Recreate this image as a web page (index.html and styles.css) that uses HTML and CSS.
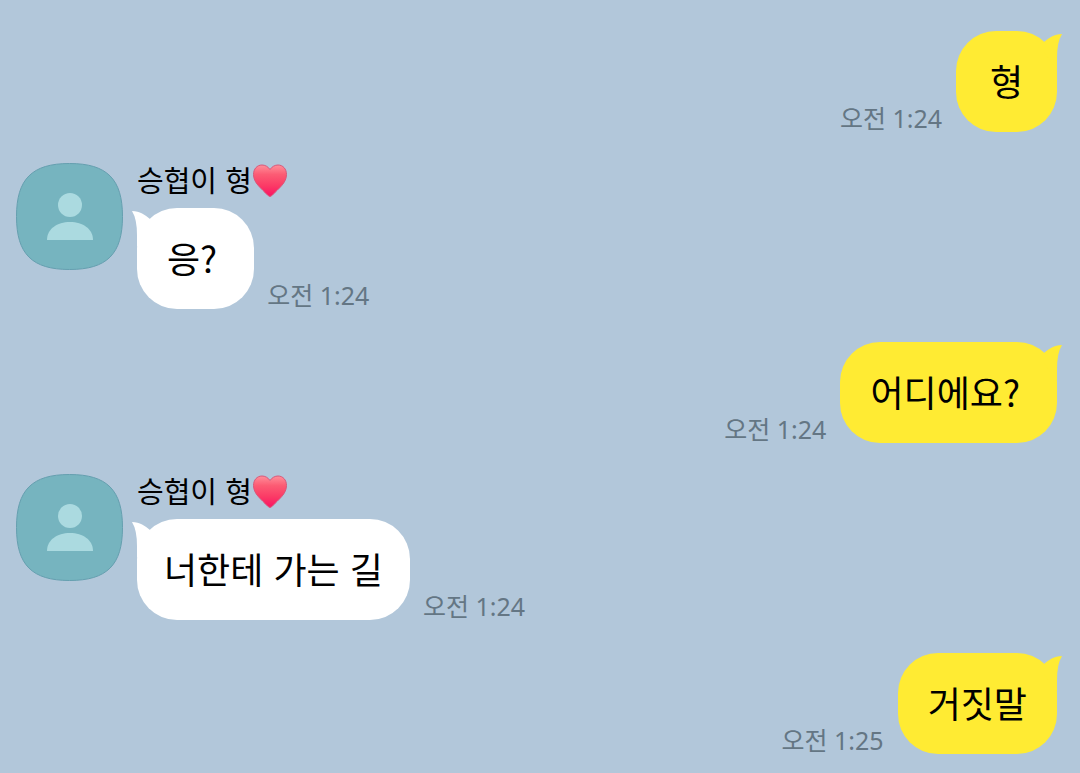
FILE: index.html
```html
<!DOCTYPE html>
<html lang="ko">
<head>
    <meta charset="UTF-8">
    <meta name="viewport" content="width=device-width, initial-scale=1.0">
    <title>채팅</title>
    <link rel="stylesheet" href="styles.css">
</head>
<body>

    <!-- shared shapes -->
    <svg class="defs" aria-hidden="true">
        <defs>
            <linearGradient id="heart-fill" x1="0" y1="0" x2="0" y2="1">
                <stop offset="0" stop-color="#ff8f9a"/>
                <stop offset="0.3" stop-color="#fc5c74"/>
                <stop offset="0.65" stop-color="#fb3b66"/>
                <stop offset="1" stop-color="#fb1263"/>
            </linearGradient>
        </defs>
        <symbol id="person" viewBox="0 0 107 107">
            <path d="M53.500 .5C91 .5 106.500 16 106.500 53.500S91 106.500 53.500 106.500 .5 91 .5 53.500 16 .5 53.500 .5z" fill="#76b4bf" stroke="#659faf"/>
            <circle cx="54" cy="42" r="12" fill="#abdae0"/>
            <path d="M31 77C31 66 41 59 54 59S77 66 77 77z" fill="#abdae0"/>
        </symbol>
        <symbol id="heart" viewBox="0 0 36 36">
            <path d="M18 6.500C16 3.500 13 2 10 2 5 2 1.500 6 1.500 11.500 1.500 20 9 25 15.500 32Q18 35 20.500 32C27 25 34.500 20 34.500 11.500 34.500 6 31 2 26 2 23 2 20 3.500 18 6.500z" fill="url(#heart-fill)" stroke="#d8587a" stroke-width="1"/>
        </symbol>
        <symbol id="tail" viewBox="0 0 22 36">
            <path d="M4 8C9 4 14 0 22 0Q17 8 17 24V36L4 18z" fill="currentColor"/>
        </symbol>
    </svg>

    <main class="chat">
        <div class="message sent">
            <time class="time">오전 1:24</time>
            <p class="bubble">형<svg class="tail"><use href="#tail"/></svg></p>
        </div>

        <div class="message received">
            <svg class="avatar"><use href="#person"/></svg>
            <div class="content">
                <h2 class="name">승협이 형<svg class="heart"><use href="#heart"/></svg></h2>
                <div class="line">
                    <p class="bubble question">응?<svg class="tail"><use href="#tail"/></svg></p>
                    <time class="time">오전 1:24</time>
                </div>
            </div>
        </div>

        <div class="message sent">
            <time class="time">오전 1:24</time>
            <p class="bubble question">어디에요?<svg class="tail"><use href="#tail"/></svg></p>
        </div>

        <div class="message received">
            <svg class="avatar"><use href="#person"/></svg>
            <div class="content">
                <h2 class="name">승협이 형<svg class="heart"><use href="#heart"/></svg></h2>
                <div class="line">
                    <p class="bubble">너한테 가는 길<svg class="tail"><use href="#tail"/></svg></p>
                    <time class="time">오전 1:24</time>
                </div>
            </div>
        </div>

        <div class="message sent">
            <time class="time">오전 1:25</time>
            <p class="bubble">거짓말<svg class="tail"><use href="#tail"/></svg></p>
        </div>
    </main>

</body>
</html>
```
FILE: styles.css
```css
* {
    box-sizing: border-box;
}
body {
    margin: 0;
    background-color: #b2c7da;
    font-family: "Noto Sans CJK KR", sans-serif;
    color: #000;
}
h2, p {
    margin: 0;
    font-weight: 400;
}
.defs {
    position: absolute;
    width: 0;
    height: 0;
}
.chat {
    padding: 31px 23px 19px 16px;
}
.message {
    display: flex;
}
.sent {
    justify-content: flex-end;
    align-items: flex-end;
    gap: 14px;
}
.received {
    align-items: flex-start;
    gap: 14px;
    margin: 31px 0 33px;
}
.avatar {
    flex: none;
    width: 107px;
    height: 107px;
}
.name {
    display: flex;
    align-items: flex-start;
    height: 36px;
    margin-bottom: 9px;
    font-size: 29px;
    line-height: 32px;
}
.heart {
    width: 36px;
    height: 36px;
}
.line {
    display: flex;
    align-items: flex-end;
    gap: 13px;
}
.bubble {
    position: relative;
    min-width: 101px;
    padding: 23px 30px 26px;
    border-radius: 40px;
    font-size: 36px;
    line-height: 52px;
    text-align: center;
}
.question {
    padding-right: 37px;
}
.sent .bubble {
    background-color: #ffeb33;
}
.received .bubble {
    background-color: #fff;
}
.received .bubble:not(.question) {
    padding: 23px 27px 26px;
}
.tail {
    position: absolute;
    top: 3px;
    right: -5px;
    width: 22px;
    height: 36px;
    color: #ffeb33;
}
.received .tail {
    right: auto;
    left: -5px;
    color: #fff;
    transform: scaleX(-1);
}
.time {
    font-family: "Noto Sans", "Noto Sans CJK KR", sans-serif;
    font-size: 25px;
    font-weight: 400;
    line-height: 28px;
    color: #647684;
}
```
